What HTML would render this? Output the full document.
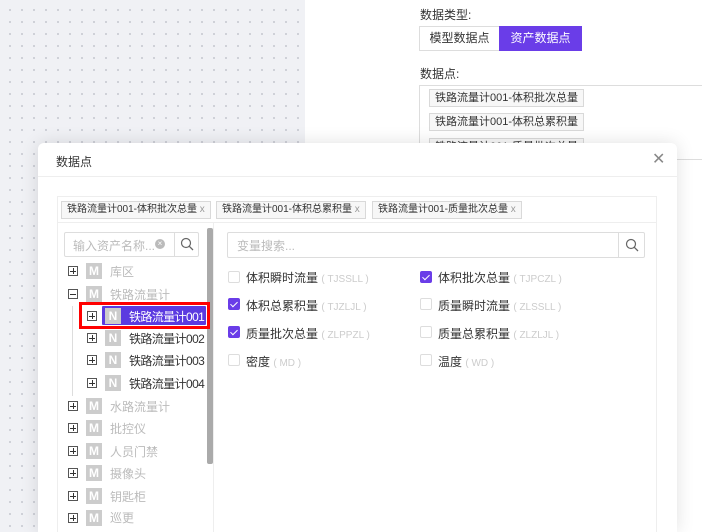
<!DOCTYPE html>
<html style="width:702px;height:532px;overflow:hidden"><head><meta charset="utf-8"><style>
*{margin:0;padding:0;box-sizing:border-box}
body{width:702px;height:532px;overflow:hidden;position:relative;font-family:"Liberation Sans","Noto Sans CJK SC",sans-serif;font-size:12px;color:#333;background:#fff}
.a{position:absolute}
.bg{left:0;top:0;width:305px;height:532px;background-color:#f0f1f5;background-image:radial-gradient(circle,#c9cbd3 0.8px,transparent 1.2px);background-size:12px 12px;background-position:4px 4px}
.tag{position:absolute;height:18px;border:1px solid #d9d9d9;background:#f7f7f7;font-size:11px;line-height:16px;padding:0 5px;color:#333;white-space:nowrap}
.modal{left:38px;top:143px;width:639px;height:389px;background:#fff;border-radius:6px 6px 0 0;box-shadow:0 0 18px rgba(0,0,0,.12);overflow:hidden}
.pm{position:absolute;width:10px;height:10px;border:1px solid #555;background:#fff}
.pm:before{content:"";position:absolute;left:1px;top:3.5px;width:6px;height:1px;background:#333}
.pm.p:after{content:"";position:absolute;left:3.5px;top:1px;width:1px;height:6px;background:#333}
.ic{position:absolute;width:16px;height:16px;background:#ccc;color:#fff;font-size:12px;line-height:16px;text-align:center;font-weight:bold}
.tx{position:absolute;font-size:12px;color:#bbb;white-space:nowrap}
.nn{letter-spacing:-0.6px}
.cb{position:absolute;width:12px;height:12px;border:1px solid #ddd;border-radius:2px;background:#fff}
.cb.on{background:#6a3de8;border-color:#6a3de8}
.cb.on:after{content:"";position:absolute;left:3px;top:1px;width:3px;height:6px;border:solid #fff;border-width:0 1.5px 1.5px 0;transform:rotate(45deg)}
.cl{position:absolute;font-size:12px;color:#333;white-space:nowrap}
.cl span{color:#ccc;font-size:10px}
</style></head><body>
<div class="a bg"></div>
<div class="a" style="left:420px;top:6px;font-size:12px;color:#333">数据类型:</div>
<div class="a" style="left:419px;top:26px;width:81px;height:25px;border:1px solid #ddd;text-align:center;line-height:23px;color:#333">模型数据点</div>
<div class="a" style="left:499px;top:26px;width:83px;height:25px;background:#6a3de8;color:#fff;text-align:center;line-height:25px">资产数据点</div>
<div class="a" style="left:420px;top:65px;color:#333">数据点:</div>
<div class="a" style="left:419px;top:85px;width:283px;height:75px;border:1px solid #ddd;border-right:none"></div>
<div class="tag" style="left:429px;top:89px">铁路流量计001-体积批次总量</div>
<div class="tag" style="left:429px;top:113px">铁路流量计001-体积总累积量</div>
<div class="tag" style="left:429px;top:138px">铁路流量计001-质量批次总量</div>

<div class="a modal">
<div class="a" style="left:18px;top:10px;font-size:12px;color:#333">数据点</div>
<div class="a" style="left:614px;top:6px;font-size:16px;color:#888">✕</div>
<div class="a" style="left:0;top:33px;width:639px;height:1px;background:#eee"></div>
<div class="a" style="left:19px;top:53px;width:600px;height:336px;border:1px solid #eee;border-bottom:none"></div>
<div class="a" style="left:19px;top:79px;width:600px;height:1px;background:#eee"></div>
<div class="tag" style="left:23px;top:58px;font-size:10px">铁路流量计001-体积批次总量 <span style="color:#999">x</span></div>
<div class="tag" style="left:178px;top:58px;font-size:10px">铁路流量计001-体积总累积量 <span style="color:#999">x</span></div>
<div class="tag" style="left:334px;top:58px;font-size:10px">铁路流量计001-质量批次总量 <span style="color:#999">x</span></div>
<div class="a" style="left:175px;top:80px;width:1px;height:309px;background:#eee"></div>
<div class="a" style="left:169px;top:85px;width:6px;height:236px;background:#aaa;border-radius:2px"></div>
</div>

<div class="a" style="left:64px;top:232px;width:135px;height:25px;border:1px solid #ddd;border-radius:2px"></div>
<div class="a" style="left:174px;top:232px;width:1px;height:25px;background:#ddd"></div>
<div class="a" style="left:73px;top:237px;color:#bbb;font-size:12px">输入资产名称...</div>
<div class="a" style="left:155px;top:239px;width:10px;height:10px;border-radius:50%;background:#bbb;color:#fff;font-size:8px;line-height:10px;text-align:center">×</div>
<svg class="a" style="left:180px;top:237px" width="14" height="14" viewBox="0 0 14 14"><circle cx="6" cy="6" r="4.5" fill="none" stroke="#666" stroke-width="1.2"/><path d="M9.3 9.3L13 13" stroke="#666" stroke-width="1.3"/></svg>

<div class="pm p" style="left:68px;top:266px"></div><div class="ic" style="left:86px;top:263px">M</div><div class="tx" style="left:110px;top:263px">库区</div>
<div class="pm" style="left:68px;top:289px"></div><div class="ic" style="left:86px;top:286px">M</div><div class="tx" style="left:110px;top:286px">铁路流量计</div>
<div class="a" style="left:72px;top:306px;width:1px;height:90px;background:#ddd"></div>
<div class="a" style="left:79px;top:302px;width:131px;height:27px;border:3px solid #f00"></div>
<div class="a" style="left:102px;top:306px;width:104px;height:19px;background:#5b3ae0;border-radius:1px"></div>
<div class="pm p" style="left:87px;top:311px"></div><div class="ic" style="left:105px;top:308px;background:#ccc">N</div><div class="tx nn" style="left:129px;top:308px;color:#fff">铁路流量计001</div>
<div class="pm p" style="left:87px;top:333px"></div><div class="ic" style="left:105px;top:330px">N</div><div class="tx nn" style="left:129px;top:330px;color:#333">铁路流量计002</div>
<div class="pm p" style="left:87px;top:355px"></div><div class="ic" style="left:105px;top:352px">N</div><div class="tx nn" style="left:129px;top:352px;color:#333">铁路流量计003</div>
<div class="pm p" style="left:87px;top:378px"></div><div class="ic" style="left:105px;top:375px">N</div><div class="tx nn" style="left:129px;top:375px;color:#333">铁路流量计004</div>
<div class="pm p" style="left:68px;top:401px"></div><div class="ic" style="left:86px;top:398px">M</div><div class="tx" style="left:110px;top:398px">水路流量计</div>
<div class="pm p" style="left:68px;top:423px"></div><div class="ic" style="left:86px;top:420px">M</div><div class="tx" style="left:110px;top:420px">批控仪</div>
<div class="pm p" style="left:68px;top:446px"></div><div class="ic" style="left:86px;top:443px">M</div><div class="tx" style="left:110px;top:443px">人员门禁</div>
<div class="pm p" style="left:68px;top:468px"></div><div class="ic" style="left:86px;top:465px">M</div><div class="tx" style="left:110px;top:465px">摄像头</div>
<div class="pm p" style="left:68px;top:491px"></div><div class="ic" style="left:86px;top:488px">M</div><div class="tx" style="left:110px;top:488px">钥匙柜</div>
<div class="pm p" style="left:68px;top:513px"></div><div class="ic" style="left:86px;top:510px">M</div><div class="tx" style="left:110px;top:510px;line-height:16px">巡更</div>

<div class="a" style="left:227px;top:232px;width:418px;height:26px;border:1px solid #ddd;border-radius:2px"></div>
<div class="a" style="left:618px;top:232px;width:1px;height:26px;background:#ddd"></div>
<div class="a" style="left:237px;top:237px;color:#bbb">变量搜索...</div>
<svg class="a" style="left:625px;top:238px" width="14" height="14" viewBox="0 0 14 14"><circle cx="6" cy="6" r="4.5" fill="none" stroke="#666" stroke-width="1.2"/><path d="M9.3 9.3L13 13" stroke="#666" stroke-width="1.3"/></svg>

<div class="cb" style="left:228px;top:271px"></div><div class="cl" style="left:246px;top:269px">体积瞬时流量 <span>( TJSSLL )</span></div>
<div class="cb on" style="left:420px;top:271px"></div><div class="cl" style="left:438px;top:269px">体积批次总量 <span>( TJPCZL )</span></div>
<div class="cb on" style="left:228px;top:298px"></div><div class="cl" style="left:246px;top:297px">体积总累积量 <span>( TJZLJL )</span></div>
<div class="cb" style="left:420px;top:298px"></div><div class="cl" style="left:438px;top:297px">质量瞬时流量 <span>( ZLSSLL )</span></div>
<div class="cb on" style="left:228px;top:326px"></div><div class="cl" style="left:246px;top:325px">质量批次总量 <span>( ZLPPZL )</span></div>
<div class="cb" style="left:420px;top:326px"></div><div class="cl" style="left:438px;top:325px">质量总累积量 <span>( ZLZLJL )</span></div>
<div class="cb" style="left:228px;top:354px"></div><div class="cl" style="left:246px;top:353px">密度 <span>( MD )</span></div>
<div class="cb" style="left:420px;top:354px"></div><div class="cl" style="left:438px;top:353px">温度 <span>( WD )</span></div>
</body></html>
